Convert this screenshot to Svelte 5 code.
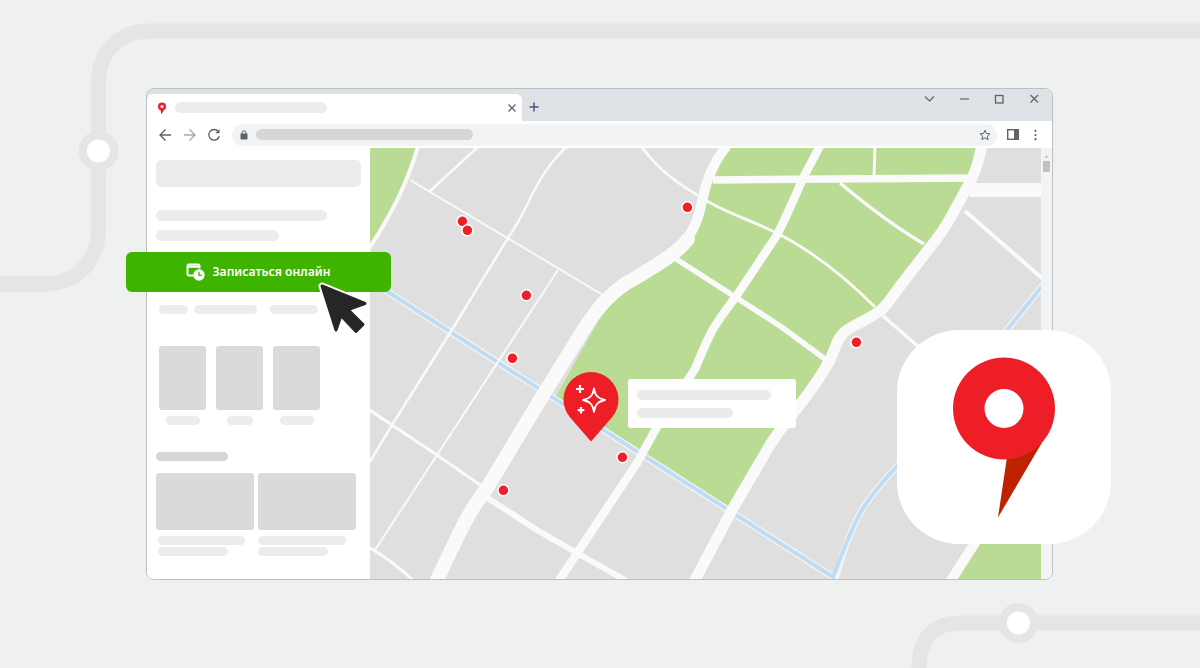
<script>
  const dots = [[462.4,221.3],[467.4,230.3],[526.4,295.3],[687.4,207.3],[512.4,358.3],[856.4,342.3],[622.4,457.3],[503.4,490.3]];
  const thumbs = [34, 26, 34];
  const chips = [[29,6],[63,13],[48,0]];
  const cards = [[87,70,2],[88,70,0]];
  const road3 = 'C978 162 977 168 972 178C965 192 960 200 952 215C945 228 938 238 928 250L900 286C893 296 888 304 880 311C870 318 860 322 847 330C838 336 836 346 830 360C820 378 810 392 798 407C786 422 778 432 770 445L732 510';
  const roads = [
    ['M418 146C410 175 396 208 368 250', 4],
    ['M410 180L603 295', 2],
    ['M430 191L479 146', 2.5],
    ['M567 146C548 165 540 178 527 205C520 220 515 227 508 238L453 328L392 425L368 465', 2.5],
    ['M558 270L437 455L375 550', 2],
    ['M641 146C660 172 680 185 707 201C725 212 750 220 777 233C810 250 840 272 875 307', 2.8],
    ['M673 257L740 300L783 328L825 359', 5.5],
    ['M368 409L437 455L483 487', 3],
    ['M483 495L537 530L577 553L627 581', 6],
    ['M368 547C385 556 400 568 415 582', 3],
    ['M713 180L973 178', 7.5],
    ['M970 190L1043 190', 14],
    ['M875 146L874 178', 3],
    ['M840 183C865 204 890 224 924 244', 3.5],
    ['M965 211L1043 279', 4],
    ['M883 316L920 348', 3.5],
    ['M820 146L803 178C795 197 787 215 777 235L737 295C725 312 716 322 710 335C704 347 700 357 695 369L657 427L637 463L558 582', 8.5],
    ['M980 535L950 582', 10]
  ];
</script>

<div class="page">
  <svg class="metro" width="1200" height="668" viewBox="0 0 1200 668" aria-hidden="true">
    <path d="M1200 31H150C120 31 98.500 52 98.500 82V228C98.500 262 76 284 44 284H0" />
    <path d="M1200 623H960C934 623 919 638 919 668" />
    <circle class="outer" cx="98.500" cy="151" r="20" />
    <circle class="inner" cx="98.500" cy="151" r="11.500" />
    <circle class="outer" cx="1018.500" cy="623" r="20" />
    <circle class="inner" cx="1018.500" cy="623" r="11.500" />
  </svg>

  <div class="window">
    <div class="strip">
      <div class="tab">
        <svg class="favicon" width="10" height="14" viewBox="0 0 10 14"><path d="M3.500 8L4.400 13.500L7.500 7.500Z" fill="#bf2200"/><circle cx="5" cy="5.500" r="2.800" fill="none" stroke="#f01f27" stroke-width="2.400"/></svg>
        <div class="tab-title"></div>
        <svg class="tab-x" width="10" height="10" viewBox="0 0 10 10"><path d="M1.500 1.500L8.500 8.500M8.500 1.500L1.500 8.500" stroke="#5f6368" stroke-width="1.300"/></svg>
      </div>
      <svg class="plus" width="12" height="12" viewBox="0 0 12 12"><path d="M6 1.500V10.500M1.500 6H10.500" stroke="#4a5378" stroke-width="1.400"/></svg>
      <div class="controls">
        <svg width="35" height="12" viewBox="0 0 35 12"><path d="M0 3.500L4.500 8L9 3.500" fill="none" stroke="#5f6368" stroke-width="1.200" transform="translate(13 0)"/></svg>
        <svg width="35" height="12" viewBox="0 0 35 12"><path d="M13 6H22" stroke="#5f6368" stroke-width="1.200"/></svg>
        <svg width="35" height="12" viewBox="0 0 35 12"><rect x="13.500" y="2.500" width="7.500" height="7.500" fill="none" stroke="#5f6368" stroke-width="1.300"/></svg>
        <svg width="35" height="12" viewBox="0 0 35 12"><path d="M13.500 2L21 9.500M21 2L13.500 9.500" stroke="#5f6368" stroke-width="1.200"/></svg>
      </div>
    </div>

    <div class="toolbar">
      <svg class="nav" width="14" height="14" viewBox="0 0 14 14"><path d="M13 7H2M7.500 1.500L2 7L7.500 12.500" fill="none" stroke="#5f6368" stroke-width="1.400"/></svg>
      <svg class="nav" width="14" height="14" viewBox="0 0 14 14"><path d="M1 7H12M6.500 1.500L12 7L6.500 12.500" fill="none" stroke="#a9abad" stroke-width="1.400"/></svg>
      <svg class="nav" width="14" height="14" viewBox="0 0 14 14"><path d="M11.200 3.400A5.300 5.300 0 1 0 12.300 8" fill="none" stroke="#5f6368" stroke-width="1.300"/><path d="M12.500 1V5.200H8.300Z" fill="#5f6368"/></svg>
      <div class="omnibox">
        <svg width="8" height="10" viewBox="0 0 8 10"><path d="M2 4V2.800A2 2 0 0 1 6 2.800V4" fill="none" stroke="#5f6368"/><rect x="0.500" y="3.500" width="7" height="6" rx="0.800" fill="#5f6368"/></svg>
        <div class="url"></div>
        <svg class="star" width="12" height="12" viewBox="0 0 12 12"><path d="M6 1.200L7.400 4.500L11 4.800L8.300 7.100L9.100 10.600L6 8.800L2.900 10.600L3.700 7.100L1 4.800L4.600 4.500Z" fill="none" stroke="#5f6368" stroke-width="1"/></svg>
      </div>
      <svg class="side" width="12" height="11" viewBox="0 0 12 11"><rect x="0.700" y="0.700" width="10.600" height="9.600" fill="none" stroke="#5f6368" stroke-width="1.400"/><rect x="7" y="1" width="4" height="9" fill="#5f6368"/></svg>
      <svg class="more" width="3" height="12" viewBox="0 0 3 12"><circle cx="1.500" cy="1.800" r="1.100" fill="#5f6368"/><circle cx="1.500" cy="6" r="1.100" fill="#5f6368"/><circle cx="1.500" cy="10.200" r="1.100" fill="#5f6368"/></svg>
    </div>

    <div class="content">
      <aside class="panel">
        <div class="search"></div>
        <div class="bar first"></div>
        <div class="bar second"></div>
        <div class="cta-wrap">
          <div class="cta">
            <svg width="19" height="18" viewBox="0 0 19 18"><path d="M8 12.500H2.800A1.300 1.300 0 0 1 1.500 11.200V2.800A1.300 1.300 0 0 1 2.800 1.500H12.200A1.300 1.300 0 0 1 13.500 2.800V5.500M1.500 3.800H13.500" fill="none" stroke="#fff" stroke-width="2"/><circle cx="13" cy="12" r="5.700" fill="#fff"/><path d="M13 8.800V12.300H15.800" fill="none" stroke="#3eb300" stroke-width="1.300"/></svg>
            <span>Записаться онлайн</span>
          </div>
          <svg class="cursor" width="52" height="54" viewBox="0 0 52 54"><path d="M4 4L47 21.500L30 27.500L45 42.500L38 49.500L23 33.500L18 48Z" fill="#262626" stroke="#fff" stroke-width="7" stroke-linejoin="round"/><path d="M4 4L47 21.500L30 27.500L45 42.500L38 49.500L23 33.500L18 48Z" fill="#262626" stroke="#262626" stroke-width="3" stroke-linejoin="round"/></svg>
        </div>
        <div class="chips">
          {#each chips as [w, g]}
            <div class="chip" style="width:{w}px;margin-right:{g}px"></div>
          {/each}
        </div>
        <div class="thumbs">
          {#each thumbs as w}
            <div class="thumb-col">
              <div class="thumb"></div>
              <div class="chip" style="width:{w}px"></div>
            </div>
          {/each}
        </div>
        <div class="heading"></div>
        <div class="cards">
          {#each cards as [a, b, m]}
            <div class="card-col">
              <div class="card"></div>
              <div class="chip line" style="width:{a}px;margin-left:{m}px"></div>
              <div class="chip line2" style="width:{b}px;margin-left:{m}px"></div>
            </div>
          {/each}
        </div>
      </aside>

      <div class="map">
        <svg width="671" height="431" viewBox="370 148 671 431" aria-hidden="true">
          <rect x="370" y="148" width="671" height="431" fill="#dfdfdf" />
          <path d="M370 148H418C410 175 396 208 370 248Z" fill="#badb93" />
          <path d="M727 148H982{road3}L555 398L617 288L670 255C690 240 697 225 700 211Z" fill="#badb93" />
          <path d="M980 535H1041V579H952Z" fill="#badb93" />
          <path class="river-case" d="M385 290L833 577L836 577C842 555 850 530 862 510C875 488 890 475 905 457L1007 330L1043 285" />
          <path class="river" d="M385 290L833 577C842 555 850 530 862 510C875 488 890 475 905 457L1007 330L1043 285" />
          {#each roads as [d, w]}
            <path class="road" {d} stroke-width={w} />
          {/each}
          <path class="road" d="M727 146C718 156 712 168 707 182C702 198 701 212 695 225C692 231 690 235 686 240" stroke-width="10" />
          <path class="road" d="M688 239C680 250 665 261 625 284C605 298 595 312 582 332L540 400L487 488C478 500 470 512 465 522C458 535 452 548 436 582" stroke-width="14" stroke-linecap="round" />
          <path class="road" d="M982 146{road3}L694 582" stroke-width="11" />
          {#each dots as [x, y]}
            <circle cx={x} cy={y} r="5.500" fill="#ef1f28" stroke="#fff" stroke-width="1.500" />
          {/each}
        </svg>

        <svg class="pin" width="56" height="70" viewBox="0 0 56 70">
          <path d="M28 69.500L6.930 45.180A27.500 27.500 0 1 1 49.070 45.180Z" fill="#ee1e27"/>
          <path d="M31 16.500C32 23.500 35 26.500 42 28C35 29.500 32 32.500 31 40C30 32.500 27 29.500 20 28C27 26.500 30 23.500 31 16.500Z" fill="none" stroke="#fff" stroke-width="1.800" stroke-linejoin="round"/>
          <path d="M17 13V21M13 17H21M18 35V41.500M14.700 38.200H21.300" stroke="#fff" stroke-width="2.200"/>
        </svg>
        <div class="info">
          <div class="info-a"></div>
          <div class="info-b"></div>
        </div>
      </div>

      <div class="scroll">
        <svg width="7" height="5" viewBox="0 0 7 5"><path d="M3.500 1L6 4H1Z" fill="#c4c4c4"/></svg>
        <div class="thumb-bar"></div>
      </div>
    </div>
  </div>

  <div class="app-icon">
    <svg width="106" height="162" viewBox="0 0 106 162">
      <path d="M55 100L46 160.500L100 68.500Z" fill="#bf2200"/>
      <path fill-rule="evenodd" d="M52 0.500A51 51 0 1 1 52 102.500A51 51 0 1 1 52 0.500ZM52 32A19.500 19.500 0 1 0 52 71A19.500 19.500 0 1 0 52 32Z" fill="#ee1e27"/>
    </svg>
  </div>
</div>

<style>
  :global(body) { margin: 0; }
  .page {
    position: relative;
    width: 1200px;
    height: 668px;
    overflow: hidden;
    background: #eff0f0;
    padding: 88px 147px 0 146px;
    box-sizing: border-box;
    font-family: "Noto Sans", "Open Sans", sans-serif;
  }
  .metro { position: absolute; left: 0; top: 0; }
  .metro path { fill: none; stroke: #e4e5e5; stroke-width: 15; }
  .outer { fill: #e4e5e5; }
  .inner { fill: #fff; }

  .window {
    position: relative;
    width: 905px;
    border: 1px solid #bdbfc0;
    border-radius: 8px;
    background: #fff;
  }
  .strip {
    display: flex;
    align-items: flex-start;
    height: 32px;
    background: #dee1e6;
    border-radius: 7px 7px 0 0;
  }
  .tab {
    display: flex;
    flex: none;
    align-items: center;
    width: 375px;
    height: 27px;
    margin-top: 5px;
    background: #fff;
    border-radius: 6px 6px 0 0;
    box-sizing: border-box;
    padding-left: 10px;
  }
  .favicon { flex: none; }
  .tab-title {
    flex: none;
    width: 152px;
    height: 11px;
    margin-left: 8px;
    border-radius: 6px;
    background: #ececec;
  }
  .tab-x { flex: none; margin-left: 180px; }
  .plus { flex: none; margin: 12px 0 0 6px; }
  .controls {
    display: flex;
    flex: none;
    margin: 4px 0 0 371.500px;
  }
  .controls svg { flex: none; }
  .toolbar {
    display: flex;
    align-items: center;
    height: 27px;
    padding-left: 11px;
    box-sizing: border-box;
  }
  .nav { margin-right: 10.500px; flex: none; }
  .omnibox {
    display: flex;
    flex: none;
    align-items: center;
    width: 765px;
    height: 22px;
    border-radius: 11px;
    background: #f1f3f4;
    box-sizing: border-box;
    padding: 0 6px 0 8px;
  }
  .url {
    width: 217px;
    height: 11px;
    margin-left: 8px;
    border-radius: 6px;
    background: #d6d6d6;
  }
  .star { margin-left: auto; }
  .side { margin-left: 10px; flex: none; }
  .more { margin-left: 15px; flex: none; }

  .content { display: flex; height: 431px; }
  .panel {
    position: relative;
    z-index: 2;
    width: 223px;
    flex: none;
    box-sizing: border-box;
    padding: 12px 0 0 9px;
    background: #fff;
    border-radius: 0 0 6px 7px;
  }
  .search { width: 205px; height: 27px; border-radius: 5px; background: #ececec; }
  .bar { height: 11px; border-radius: 6px; background: #ececec; }
  .first { width: 171px; margin-top: 23px; }
  .second { width: 123px; margin-top: 9px; }
  .cta-wrap { position: relative; margin: 11px 0 0 -30px; width: 265px; height: 40px; }
  .cta {
    display: flex;
    align-items: center;
    justify-content: center;
    gap: 7px;
    height: 40px;
    padding-bottom: 1px;
    box-sizing: border-box;
    border-radius: 6px;
    background: #3eb300;
    color: #fff;
    font-size: 12.200px;
    font-weight: 600;
  }
  .cursor { position: absolute; left: 192px; top: 30px; }
  .chips { display: flex; margin: 13px 0 0 3px; }
  .chip { height: 9px; border-radius: 5px; background: #ececec; }
  .thumbs { display: flex; gap: 10px; margin: 32px 0 0 3px; }
  .thumb-col { display: flex; flex-direction: column; align-items: center; gap: 6px; width: 47px; }
  .thumb { width: 47px; height: 64px; border-radius: 3px; background: #dadada; }
  .heading { width: 72px; height: 9px; margin-top: 27px; border-radius: 5px; background: #d6d6d6; }
  .cards { display: flex; gap: 4px; margin-top: 12px; }
  .card-col { width: 98px; }
  .card { height: 57px; border-radius: 3px; background: #dadada; }
  .line { margin-top: 5.500px; }
  .line2 { margin-top: 2.500px; }

  .map { position: relative; width: 671px; height: 431px; }
  .map > svg:first-child { display: block; }
  .road { fill: none; stroke: #fafafa; }
  .river { fill: none; stroke: #bfdcf5; stroke-width: 4; }
  .river-case { fill: none; stroke: #f4f4f4; stroke-width: 6.500; }
  .pin { position: absolute; left: 193px; top: 224px; }
  .info {
    position: absolute;
    left: 258px;
    top: 231px;
    width: 168px;
    height: 49px;
    box-sizing: border-box;
    padding: 11px 0 0 9px;
    border-radius: 3px;
    background: #fff;
  }
  .info-a { width: 134px; height: 10px; border-radius: 5px; background: #ebebeb; }
  .info-b { width: 96px; height: 10px; margin-top: 8px; border-radius: 5px; background: #ebebeb; }

  .scroll {
    width: 11px;
    flex: none;
    background: #f1f3f4;
    border-radius: 0 0 7px 0;
    box-sizing: border-box;
    padding-top: 6px;
    display: flex;
    flex-direction: column;
    align-items: center;
  }
  .thumb-bar { width: 7px; height: 11px; margin-top: 2px; background: #c1c1c1; }

  .app-icon {
    position: absolute;
    left: 897px;
    top: 330px;
    width: 214px;
    height: 214px;
    border-radius: 62px;
    background: #fff;
    display: flex;
    justify-content: center;
    box-sizing: border-box;
    padding: 26.500px 0 0 1px;
  }
  .app-icon svg { margin-left: 1px; }
</style>
